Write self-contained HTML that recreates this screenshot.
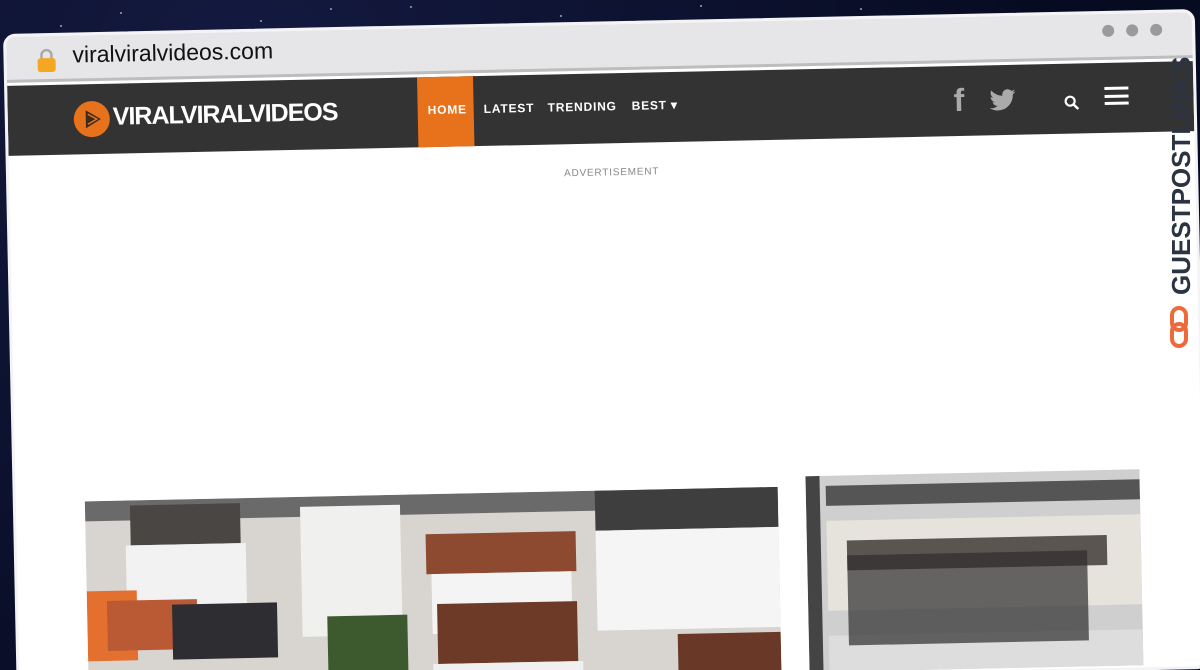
<!DOCTYPE html>
<html><head><meta charset="utf-8"><style>
*{margin:0;padding:0;box-sizing:border-box}
html,body{width:1200px;height:670px;overflow:hidden;background:#0b1030;font-family:"Liberation Sans",sans-serif}
#wrap{position:relative;width:1200px;height:670px;overflow:hidden}
.bg{position:absolute;inset:0;background:radial-gradient(circle at 20% 10%,#141a40,#070b22 70%)}
.star{position:absolute;width:2px;height:2px;background:#9aa;border-radius:50%}
.win{position:absolute;left:3px;top:34px;width:1192px;height:660px;background:#fff;border-radius:12px;transform:rotate(-1.2deg);transform-origin:0 0;overflow:hidden;border:3px solid #f4f4f6}
.addr{position:absolute;left:0;top:0;right:0;height:46px;background:#e6e6e8;border-bottom:3px solid #bdbdbd}
.lock{position:absolute;left:30px;top:12px;width:20px;height:24px}
.url{position:absolute;left:66px;top:6px;font-size:23px;color:#111}
.dots{position:absolute;right:30px;top:10px}
.dots i{display:inline-block;width:12px;height:12px;border-radius:50%;background:#9a9a9c;margin-left:12px}
.nav{position:absolute;left:0;right:0;top:49px;height:70px;background:#333}
.logo{position:absolute;left:66px;top:17px;width:36px;height:36px;border-radius:50%;background:#e8711c}
.brand{position:absolute;left:105px;top:19px;color:#fff;font-weight:bold;font-size:25px;letter-spacing:-1px}
.home{position:absolute;left:410px;top:0;width:56px;height:70px;background:#e8711c}
.menu{position:absolute;top:26px;color:#fff;font-weight:bold;font-size:12px;letter-spacing:.8px}
.ad{position:absolute;left:555px;top:143px;font-size:10px;color:#888;letter-spacing:.8px}
.p1{position:absolute;left:69px;top:466px;width:693px;height:200px;background:#d8d4cf;overflow:hidden}
.p2{position:absolute;left:790px;top:456px;width:334px;height:196px;background:#cfcfcf;overflow:hidden}
.b{position:absolute}
.gp{position:absolute;left:1160px;top:40px;width:40px;height:330px}
</style></head><body><div id="wrap">
<div class="bg"></div>
<div class="star" style="left:120px;top:12px"></div><div class="star" style="left:260px;top:20px"></div><div class="star" style="left:410px;top:6px"></div><div class="star" style="left:560px;top:15px"></div><div class="star" style="left:700px;top:5px"></div><div class="star" style="left:860px;top:8px"></div><div class="star" style="left:60px;top:25px"></div><div class="star" style="left:330px;top:8px"></div>
<div class="win">
 <div class="addr">
  <svg class="lock" viewBox="0 0 20 24"><path d="M5 11V7a5 5 0 0 1 10 0v4" fill="none" stroke="#aaa" stroke-width="2.5"/><rect x="1" y="10" width="18" height="14" rx="3" fill="#f5a623"/></svg>
  <div class="url">viralviralvideos.com</div>
  <div class="dots"><i></i><i></i><i></i></div>
 </div>
 <div class="nav">
  <div class="logo"><svg width="36" height="36" viewBox="0 0 36 36"><path d="M12 9l15 9-15 9z" fill="#3a2a20"/><path d="M14 13l9 5-9 5" fill="none" stroke="#e8711c" stroke-width="1.5"/></svg></div>
  <div class="brand">VIRALVIRALVIDEOS</div>
  <div class="home"></div>
  <div class="menu" style="left:420px">HOME</div>
  <div class="menu" style="left:476px">LATEST</div>
  <div class="menu" style="left:540px">TRENDING</div>
  <div class="menu" style="left:624px">BEST ▾</div>
  <div style="position:absolute;left:946px;top:16px;color:#aaa;font-size:32px;font-weight:bold">f</div>
  <svg style="position:absolute;left:982px;top:24px" width="26" height="22" viewBox="0 0 24 20"><path d="M24 2.4c-.9.4-1.8.7-2.8.8 1-.6 1.8-1.6 2.2-2.7-1 .6-2 1-3.1 1.2A4.9 4.9 0 0 0 11.9 6C7.8 5.8 4.2 3.9 1.7.9c-1.3 2.3-.6 5.1 1.5 6.6-.8 0-1.6-.2-2.2-.6 0 2.4 1.7 4.4 3.9 4.8-.7.2-1.5.2-2.2.1.6 2 2.4 3.4 4.6 3.4A9.9 9.9 0 0 1 0 17.3 14 14 0 0 0 7.5 19.5c9.1 0 14-7.5 14-14v-.6c1-.7 1.8-1.6 2.5-2.5z" fill="#aaa"/></svg>
  <svg style="position:absolute;left:1056px;top:31px" width="16" height="16" viewBox="0 0 16 16"><circle cx="6.5" cy="6.5" r="4.5" fill="none" stroke="#fff" stroke-width="2.2"/><path d="M10 10l4.5 4.5" stroke="#fff" stroke-width="2.4"/></svg>
  <div style="position:absolute;left:1097px;top:24px;width:24px;height:18px;border-top:3px solid #fff;border-bottom:3px solid #fff"><div style="margin-top:4.5px;height:3px;background:#fff"></div></div>
 </div>
 <div class="ad">ADVERTISEMENT</div>
 <div class="p1">
  <div class="b" style="left:0;top:0;width:693px;height:20px;background:#6a6a6a"></div>
  <div class="b" style="left:45px;top:5px;width:110px;height:40px;background:#4a4643"></div>
  <div class="b" style="left:40px;top:45px;width:120px;height:80px;background:#f2f2f2"></div>
  <div class="b" style="left:215px;top:10px;width:100px;height:130px;background:#f0f0ee"></div>
  <div class="b" style="left:340px;top:40px;width:150px;height:40px;background:#8e4a30"></div>
  <div class="b" style="left:345px;top:80px;width:140px;height:60px;background:#f4f4f4"></div>
  <div class="b" style="left:510px;top:0;width:183px;height:40px;background:#3e3e3e"></div>
  <div class="b" style="left:510px;top:40px;width:183px;height:100px;background:#f5f5f5"></div>
  <div class="b" style="left:0;top:90px;width:50px;height:70px;background:#e47030"></div>
  <div class="b" style="left:20px;top:100px;width:90px;height:50px;background:#b95a35"></div>
  <div class="b" style="left:85px;top:105px;width:105px;height:55px;background:#2e2e32"></div>
  <div class="b" style="left:350px;top:110px;width:140px;height:60px;background:#6e3a28"></div>
  <div class="b" style="left:345px;top:170px;width:150px;height:90px;background:#f0f0f0"></div>
  <div class="b" style="left:590px;top:145px;width:103px;height:50px;background:#6a3826"></div>
  <div class="b" style="left:240px;top:120px;width:80px;height:80px;background:#3d5a2e"></div>
 </div>
 <div class="p2">
  <div class="b" style="left:0;top:0;width:14px;height:196px;background:#444"></div>
  <div class="b" style="left:20px;top:10px;width:314px;height:20px;background:#555"></div>
  <div class="b" style="left:20px;top:45px;width:314px;height:90px;background:#e6e3dd"></div>
  <div class="b" style="left:40px;top:65px;width:260px;height:30px;background:#5a5550"></div>
  <div class="b" style="left:20px;top:160px;width:314px;height:36px;background:#ddd"></div>
  <div class="b" style="left:40px;top:80px;width:240px;height:90px;background:#2e2c2c;opacity:.7"></div>
 </div>
</div>
<div class="gp">
 <svg width="40" height="330" viewBox="0 0 40 330">
  <text transform="translate(30,255) rotate(-90)" font-family="Liberation Sans" font-weight="bold" font-size="26" fill="#2a3442">GUESTPOSTLINKS</text>
  <rect x="12" y="268" width="14" height="22" rx="7" fill="none" stroke="#ee6a3a" stroke-width="4"/>
  <rect x="12" y="284" width="14" height="22" rx="7" fill="none" stroke="#ee6a3a" stroke-width="4"/>
 </svg>
</div>
</div></body></html>
